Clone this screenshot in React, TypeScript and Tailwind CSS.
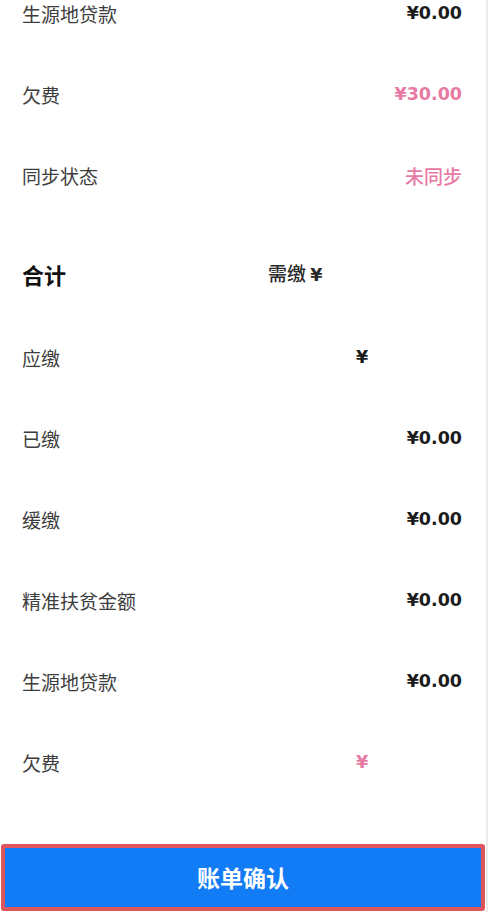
import React from "react";

const font = { fontFamily: '"Noto Sans CJK SC", "Noto Sans", sans-serif' };
const numFont = { fontFamily: '"DejaVu Sans", "Noto Sans CJK SC", sans-serif' };

function Row({ label, value, tone = "dark", blurred = false, cjk = false }: { label: string; value: string; tone?: "dark" | "pink"; blurred?: boolean; cjk?: boolean }) {
  return (
    <div className="flex h-[81px] items-center justify-between pl-[22px] pr-[26px]">
      <span className="text-[19px] leading-none text-[#3d3d3d]">{label}</span>
      <span
        style={cjk ? font : numFont}
        className={`leading-none ${cjk ? "text-[19px] font-medium" : "text-[17.5px] font-bold"} ${tone === "pink" ? "text-[#e77aa3]" : "text-[#1c1c1c]"} ${blurred ? "w-[106px] text-left" : ""}`}
      >
        {value}
      </span>
    </div>
  );
}

export default function App() {
  return (
    <div className="relative h-[912px] w-[488px] overflow-hidden bg-white" style={font}>
      <div className="absolute right-0 top-0 h-full w-[2px] bg-[#ececec]" />
      <div className="mt-[-27px]">
        <Row label="生源地贷款" value="¥0.00" />
        <Row label="欠费" value="¥30.00" tone="pink" />
        <Row label="同步状态" value="未同步" tone="pink" cjk />
        <div className="flex h-[98px] items-center pl-[22px] pt-[18px]">
          <span className="w-[246px] text-[22px] font-bold leading-none text-[#111]">合计</span>
          <span className="text-[19px] font-medium leading-none text-[#2a2a2a]">
            需缴 <span style={numFont} className="text-[17.5px] font-bold">¥</span>
          </span>
        </div>
        <div className="h-[3px]" />
        <Row label="应缴" value="¥" blurred />
        <Row label="已缴" value="¥0.00" />
        <Row label="缓缴" value="¥0.00" />
        <Row label="精准扶贫金额" value="¥0.00" />
        <Row label="生源地贷款" value="¥0.00" />
        <Row label="欠费" value="¥" tone="pink" blurred />
      </div>
      <div className="absolute bottom-[1px] left-[1px] right-[3px]">
        <button className="flex h-[67px] w-full items-center justify-center rounded-[3px] border-[4px] border-[#e0545d] bg-[#127cf7] text-[23px] font-bold text-white">
          账单确认
        </button>
      </div>
    </div>
  );
}
